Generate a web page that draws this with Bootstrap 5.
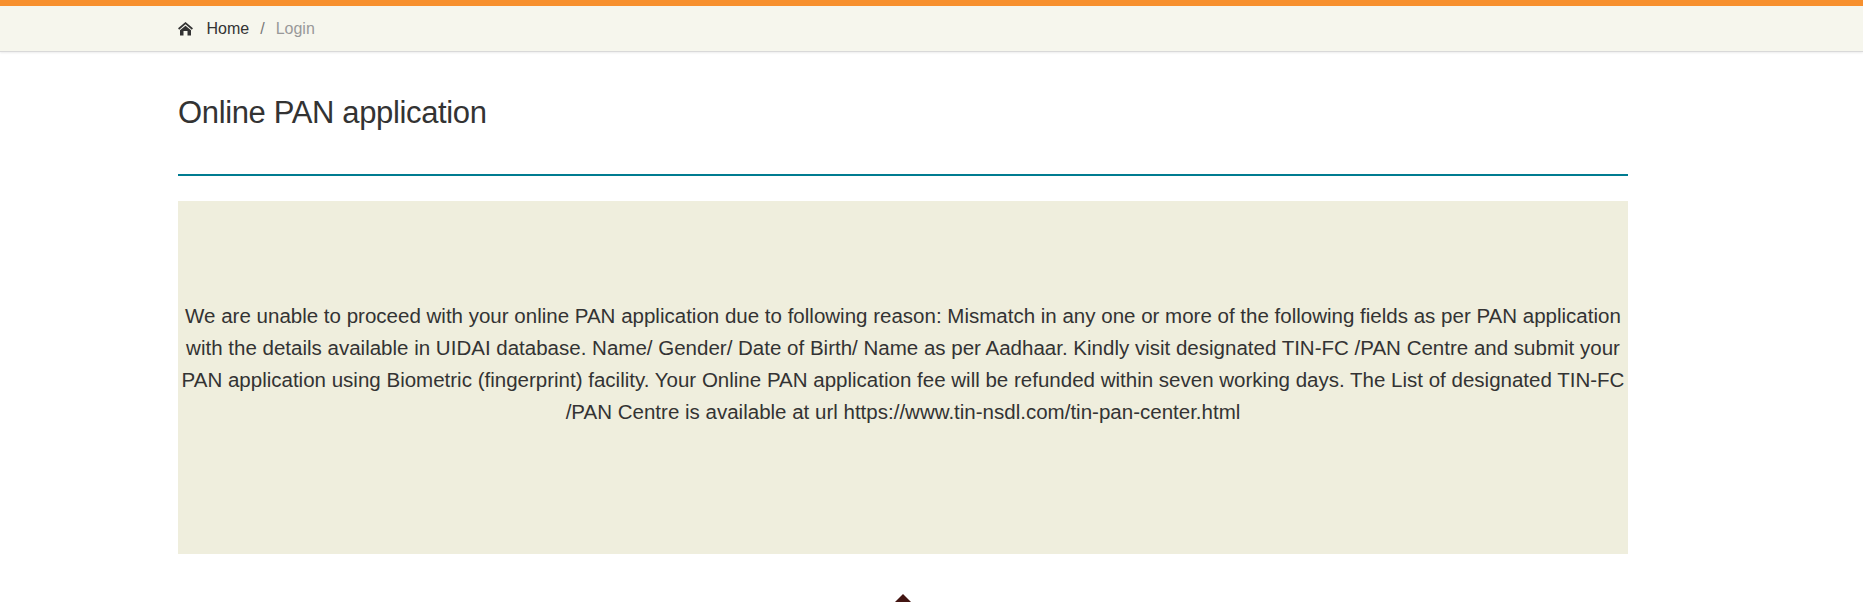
<!DOCTYPE html>
<html lang="en">
<head>
<meta charset="utf-8">
<meta name="viewport" content="width=device-width, initial-scale=1">
<title>Online PAN application</title>
<link href="https://cdn.jsdelivr.net/npm/bootstrap@5.3.0/dist/css/bootstrap.min.css" rel="stylesheet">
<style>
  body { font-family: "Liberation Sans", Arial, sans-serif; color: #333; background: #fff; height: 602px; overflow: hidden; }
  .page-wrap { width: 1450px; margin-left: 178px; }
  .crumb-bar { background: #f6f6ed; border-top: 6px solid #f7902e; border-bottom: 1px solid #d9d9d9; height: 52px; box-shadow: 0 1px 2px rgba(0,0,0,.08); }
  .crumb-bar .breadcrumb { height: 45px; font-size: 16px; line-height: 24px; --bs-breadcrumb-divider-color: #777; --bs-breadcrumb-item-padding-x: 11px; --bs-breadcrumb-item-active-color: #999; }
  .crumb-bar a { color: #333; }
  .home-icon { width: 15px; height: 14px; margin-right: 13.5px; }
  .page-title { font-size: 31px; letter-spacing: -.36px; line-height: 40px; padding: 41px 0; border-bottom: 2px solid #007c91; height: 124px; }
  .notice { background: #efeedd; height: 353px; margin-top: 25px; padding-bottom: 28px; font-size: 20.53px; line-height: 32px; }
  .up-arrow { width: 18px; height: 9px; margin: 40px auto 0; }
</style>
</head>
<body>
<header class="crumb-bar">
  <nav class="page-wrap" aria-label="breadcrumb">
    <ol class="breadcrumb align-items-center mb-0">
      <li class="breadcrumb-item d-flex align-items-center">
        <svg class="home-icon" viewBox="0 0 15 14" aria-hidden="true"><path d="M.6 7 7.5 1.1 14.4 7" fill="none" stroke="#333" stroke-width="1.7"/><path d="M7.5 3.7 2 8.2V13.5H5.5V9h4v4.5H13V8.2z" fill="#333"/></svg>
        <a class="text-decoration-none" href="#">Home</a>
      </li>
      <li class="breadcrumb-item active" aria-current="page">Login</li>
    </ol>
  </nav>
</header>
<main class="page-wrap">
  <h1 class="page-title fw-normal mb-0">Online PAN application</h1>
  <div class="notice d-flex align-items-center justify-content-center text-center">
    <p class="mb-0 text-nowrap">We are unable to proceed with your online PAN application due to following reason: Mismatch in any one or more of the following fields as per PAN application<br>with the details available in UIDAI database. Name/ Gender/ Date of Birth/ Name as per Aadhaar. Kindly visit designated TIN-FC /PAN Centre and submit your<br>PAN application using Biometric (fingerprint) facility. Your Online PAN application fee will be refunded within seven working days. The List of designated TIN-FC<br>/PAN Centre is available at url https://www.tin-nsdl.com/tin-pan-center.html</p>
  </div>
  <svg class="up-arrow d-block" viewBox="0 0 18 9" aria-hidden="true"><path d="M9 0 18 9H0z" fill="#421512"/></svg>
</main>
<script src="https://cdn.jsdelivr.net/npm/bootstrap@5.3.0/dist/js/bootstrap.bundle.min.js"></script>
</body>
</html>
